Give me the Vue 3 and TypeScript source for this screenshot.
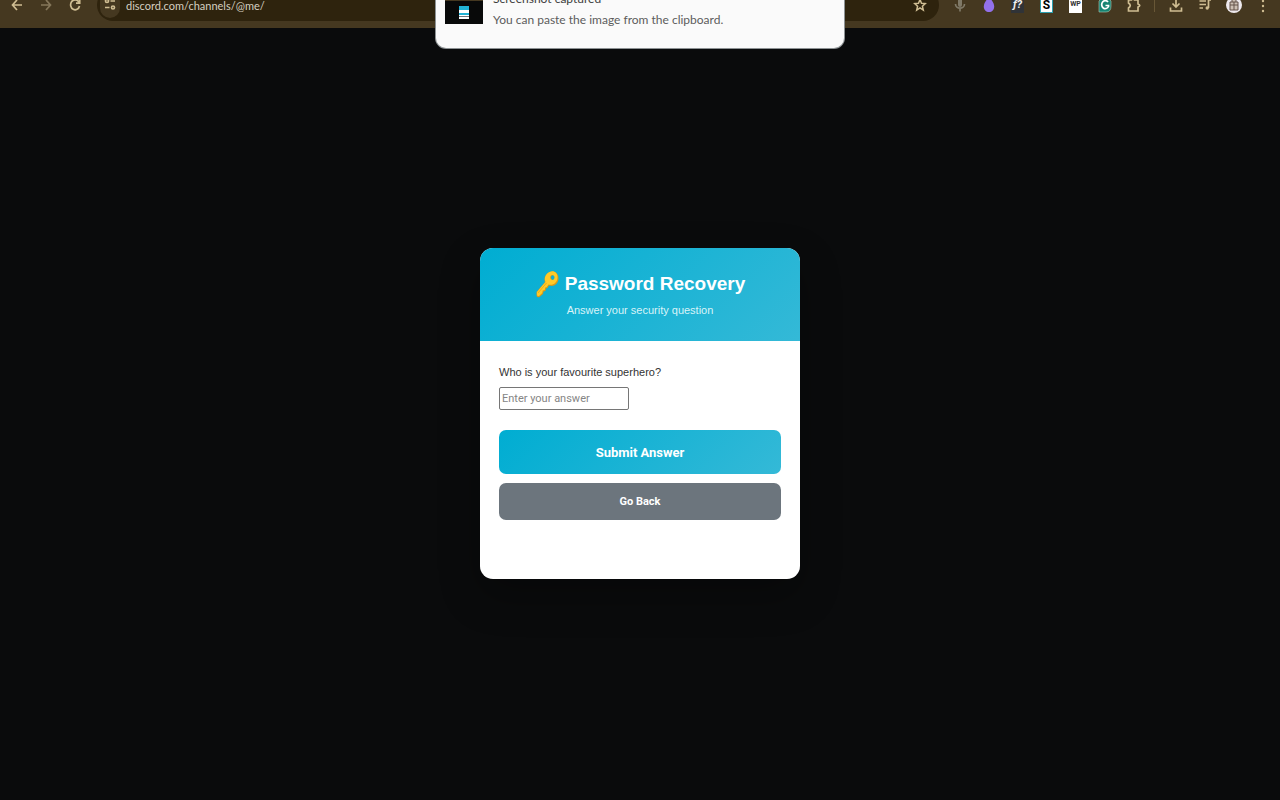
<script setup lang="ts">
import { ref } from 'vue'

const address = ref('discord.com/channels/@me/')
const answer = ref('')
</script>

<template>
  <div class="screen">
    <header class="browser">
      <div class="toolbar">
        <nav class="group" aria-label="Navigation">
          <button class="tool" type="button" aria-label="Back">
            <svg width="14" height="16" viewBox="0 0 14 16"><path d="M12 8H3M7 3L2.500 8L7 13" /></svg>
          </button>
          <button class="tool dim" type="button" aria-label="Forward">
            <svg width="14" height="16" viewBox="0 0 14 16"><path d="M2 8H11M7 3L11.500 8L7 13" /></svg>
          </button>
          <button class="tool" type="button" aria-label="Reload">
            <svg width="14" height="16" viewBox="0 0 14 16"><path d="M11.500 9A4.500 5 0 1 1 10.500 4.500L11.500 6M11.700 2V6.200H8" /></svg>
          </button>
        </nav>
        <div class="omnibox">
          <button class="site" type="button" aria-label="Site information">
            <svg width="12" height="14" viewBox="0 1 12 14"><circle cx="3" cy="4" r="1.500" /><path d="M6.500 4H11M1 10.500H5.500" /><circle cx="9" cy="10.500" r="1.500" /></svg>
          </button>
          <input v-model="address" class="address" type="text" aria-label="Address" />
          <button class="tool" type="button" aria-label="Bookmark">
            <svg width="14" height="16" viewBox="0 0 14 16"><path d="M7 2.500L8.500 6.200L12.300 6.500L9.400 9.200L10.300 13.200L7 11L3.700 13.200L4.600 9.200L1.700 6.500L5.500 6.200Z" class="thin" /></svg>
          </button>
        </div>
        <div class="group">
          <button class="tool dim" type="button" aria-label="Microphone">
            <svg width="14" height="18" viewBox="0 0 14 18"><rect x="5" y="2" width="4" height="9" rx="2" fill="#7f7967" stroke="none" /><path d="M2.500 8C2.500 13.500 11.500 13.500 11.500 8M7 12V15.500" stroke="#7f7967" /></svg>
          </button>
          <button class="tool" type="button" aria-label="Drop extension">
            <svg width="14" height="18" viewBox="0 0 14 18"><path d="M7 1C10 4 12.200 7.500 12.200 10.500C12.200 14 10 16 7 16S1.800 14 1.800 10.500C1.800 7.500 4 4 7 1Z" fill="#9270ea" stroke="none" /></svg>
          </button>
          <button class="tool" type="button" aria-label="Font finder"><span class="badge font">ƒ?</span></button>
          <button class="tool" type="button" aria-label="S extension"><span class="badge letter">S</span></button>
          <button class="tool" type="button" aria-label="WP extension"><span class="badge wp">WP</span></button>
          <button class="tool" type="button" aria-label="Grammar">
            <svg width="14" height="18" viewBox="0 0 14 18"><path d="M4 2H10L13 5V10Q13 16 8 16H1V5Z" fill="#168472" stroke="#a8cbb8" stroke-width="0.600" /><path d="M10 6A3.600 4 0 1 0 10.500 10.500V9.500H7.500" stroke="#fff" /></svg>
          </button>
          <button class="tool" type="button" aria-label="Extensions">
            <svg width="16" height="18" viewBox="0 0 16 18"><path d="M2.500 4H5.500Q7 1 8.500 4H12V8Q15.500 9.500 12 11V15H2.500V12Q6 9.500 2.500 7Z" /></svg>
          </button>
          <span class="divider"></span>
          <button class="tool" type="button" aria-label="Downloads">
            <svg width="16" height="18" viewBox="0 0 16 18"><path d="M8 2V10.500M4.500 7.500L8 11L11.500 7.500M2.500 11.500V15H13.500V11.500" /></svg>
          </button>
          <button class="tool" type="button" aria-label="Media controls">
            <svg width="16" height="18" viewBox="0 0 16 18"><path d="M2.500 5H9M2.500 8.500H9M2.500 12H6M11.500 12V4H14" /><circle cx="10.200" cy="12" r="1.700" fill="#cfbd92" stroke="none" /></svg>
          </button>
          <button class="tool" type="button" aria-label="Profile">
            <svg width="18" height="18" viewBox="0 0 18 18"><circle cx="9" cy="9" r="8" fill="#eee9ee" stroke="none" /><path d="M5 6H13V14H5ZM7 6V3.500H11V6M5 9H13M9 6V14" stroke="#65534b" stroke-width="1" fill="#cdbfb4" /></svg>
          </button>
          <button class="tool" type="button" aria-label="Menu">
            <svg width="6" height="18" viewBox="0 0 6 18"><g fill="#cfbd92" stroke="none"><circle cx="3" cy="5" r="1.200" /><circle cx="3" cy="10" r="1.200" /><circle cx="3" cy="15" r="1.200" /></g></svg>
          </button>
        </div>
      </div>
    </header>

    <aside class="notice" role="status">
      <svg class="thumb" width="38" height="40" viewBox="0 0 38 40">
        <rect width="38" height="40" fill="#080909" /><rect width="38" height="17" fill="#453820" />
        <rect x="14" y="22" width="10" height="13" fill="#fff" /><rect x="14" y="22" width="10" height="4" fill="#21b3d5" /><rect x="14" y="29" width="10" height="2" fill="#21b3d5" /><rect x="14" y="32" width="10" height="1" fill="#6c757d" />
      </svg>
      <div class="message">
        <p class="notice-title">Screenshot captured</p>
        <p class="notice-text">You can paste the image from the clipboard.</p>
      </div>
    </aside>

    <main class="page">
      <section class="card">
        <div class="banner">
          <h1>
            <svg class="key" width="24" height="28" viewBox="0 0 24 28" aria-hidden="true">
              <path fill="#d99a16" fill-rule="evenodd" d="M15 2C20 0 24 4 23.500 9C23 14 19 17 14 15.500L12.500 18L11 18.500L10.500 21L8.500 21.500L8 24L4.500 27Q1.500 28 1.500 25V22L10 12C8.500 8 10.500 4 15 2ZM17 5.500A2 2.300 0 1 0 19.500 9A2 2.300 0 0 0 17 5.500Z" />
              <path fill="#ffca28" fill-rule="evenodd" d="M14.500 2C19 0 22.700 3 22.500 7.500C22.300 12.500 18 16 13.500 14.500L11.800 17L10.200 17.500L9.700 20L7.700 20.500L7.200 23L4 26Q2 26.500 2 24.500V22L10.500 12C9 8 10.500 4 14.500 2ZM17 5A2.200 2.500 0 1 0 19.500 8A2.200 2.500 0 0 0 17 5Z" />
              <path d="M3 23L11.500 13" stroke="#e8ac20" fill="none" />
            </svg>
            <span>Password Recovery</span>
          </h1>
          <p>Answer your security question</p>
        </div>
        <form class="form" @submit.prevent>
          <label for="answer">Who is your favourite superhero?</label>
          <input id="answer" v-model="answer" type="text" placeholder="Enter your answer" />
          <button class="submit" type="submit">Submit Answer</button>
          <button class="back" type="button">Go Back</button>
        </form>
      </section>
    </main>
  </div>
</template>

<style>
body {
  margin: 0;
  background: #0a0b0c;
}
</style>

<style scoped>
.screen {
  position: relative;
  display: flex;
  flex-direction: column;
  min-height: 100vh;
  overflow: hidden;
  background: #0a0b0c;
  font-family: "Liberation Sans", sans-serif;
}
button,
input {
  box-sizing: border-box;
  font-family: Roboto, "Liberation Sans", sans-serif;
}
.browser {
  display: flex;
  flex-direction: column;
  justify-content: flex-end;
  height: 28px;
  overflow: hidden;
  background: #453820;
}
.toolbar {
  display: flex;
  flex: none;
  align-items: center;
  height: 46px;
  padding: 0 3px 0 2px;
}
.group {
  display: flex;
  align-items: center;
}
.tool {
  display: flex;
  align-items: center;
  justify-content: center;
  width: 29px;
  height: 28px;
  padding: 0;
  border: 0;
  background: none;
}
.tool svg,
.site svg {
  fill: none;
  stroke: #cfbd92;
  stroke-width: 1.7;
}
.tool .thin {
  stroke-width: 1.5;
}
.dim svg {
  stroke: #85775a;
}
.omnibox {
  display: flex;
  flex: 1;
  align-items: center;
  height: 32px;
  margin: 0 6px 0 8px;
  padding: 0 5px 0 3px;
  border-radius: 16px;
  background: #2e230d;
}
.site {
  display: flex;
  align-items: center;
  justify-content: center;
  width: 20px;
  height: 26px;
  padding: 0;
  border: 0;
  border-radius: 10px;
  background: #453820;
}
.address {
  flex: 1;
  min-width: 0;
  margin-left: 6px;
  padding: 0;
  border: 0;
  outline: 0;
  background: none;
  color: #d5cfc0;
  font-family: Lato, "Noto Sans", sans-serif;
  font-size: 11px;
}
.badge {
  display: block;
  box-sizing: border-box;
  width: 13px;
  height: 16px;
  font-weight: bold;
  text-align: center;
}
.font {
  background: #303337;
  color: #eee;
  font-size: 11px;
  font-style: italic;
  line-height: 16px;
}
.letter {
  border: 1px solid #2b9fb0;
  background: #fff;
  color: #000;
  font-size: 12px;
  line-height: 14px;
}
.wp {
  background: #fff;
  color: #333;
  font-size: 7px;
  line-height: 15px;
}
.divider {
  width: 1px;
  height: 14px;
  margin: 0 6px;
  background: #685736;
}
.notice {
  position: absolute;
  top: -40px;
  right: 0;
  left: 0;
  display: flex;
  box-sizing: border-box;
  width: 408px;
  margin: 0 auto;
  padding: 24px 9px 18px;
  border-radius: 0 0 10px 10px;
  background: #fafafa;
  box-shadow: 0 0 0 1px #8d9294;
  color: #5c5c5c;
}
.thumb {
  margin-right: 10px;
}
.message {
  padding-top: 4px;
}
.notice p {
  margin: 0;
  font-family: Lato, "Noto Sans", sans-serif;
  font-size: 12px;
  line-height: 21px;
}
.notice .notice-title {
  color: #3c3c3c;
}
.page {
  display: flex;
  flex: 1;
  align-items: center;
  justify-content: center;
  padding-bottom: 1px;
}
.card {
  width: 320px;
  overflow: hidden;
  border-radius: 13px;
  background: #fff;
  box-shadow: 0 16px 40px rgba(0, 0, 0, 0.3);
}
.banner {
  padding: 20px;
  background: linear-gradient(135deg, #00add2, #34b9d7);
  color: #fff;
  text-align: center;
}
h1 {
  display: flex;
  align-items: center;
  justify-content: center;
  gap: 6px;
  margin: 0;
  font-size: 19px;
  line-height: 32px;
}
.banner p {
  margin: 0;
  color: #d9f3f8;
  font-size: 11px;
  line-height: 21px;
}
.form {
  padding: 20px 19px 59px;
}
label {
  display: block;
  color: #333;
  font-size: 11px;
  line-height: 22px;
}
#answer {
  display: block;
  width: 130px;
  height: 23px;
  margin: 4px 0 20px;
  padding: 1px 2px;
  border: 1px solid #767676;
  border-radius: 2px;
  background: #fff;
  font-size: 11px;
}
#answer::placeholder {
  color: #858585;
}
.submit,
.back {
  display: block;
  width: 100%;
  border: 0;
  border-radius: 7px;
  color: #fff;
  font-weight: bold;
}
.submit {
  height: 44px;
  background: linear-gradient(135deg, #00add2, #34b9d7);
  font-size: 13px;
}
.back {
  height: 37px;
  margin-top: 9px;
  background: #6c757d;
  font-size: 11px;
}
</style>
